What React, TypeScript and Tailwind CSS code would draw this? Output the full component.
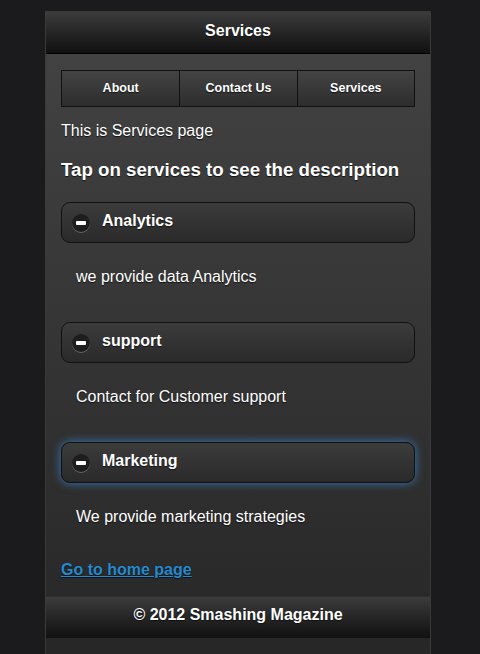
import { useState } from "react";

const font = { fontFamily: '"Liberation Sans", Arial, sans-serif' };

const sections = [
  { title: "Analytics", body: "we provide data Analytics" },
  { title: "support", body: "Contact for Customer support" },
  { title: "Marketing", body: "We provide marketing strategies" },
];

function MinusIcon() {
  return (
    <span className="flex h-[18px] w-[18px] items-center justify-center rounded-full bg-[#1e1e1e] shadow-[0_1px_0_rgba(255,255,255,0.25)]">
      <span className="block h-[4px] w-[10px] rounded-[1px] bg-white" />
    </span>
  );
}

export default function App() {
  const [focused] = useState(2);

  return (
    <div className="min-h-[654px] w-full bg-[#1b1b1d] pt-[11px] [text-shadow:0_1px_1px_#111]" style={font}>
      <div className="ml-[45px] flex min-h-[643px] w-[386px] flex-col border-x border-t border-[#3a3a3a] bg-gradient-to-b from-[#444] to-[#272727]">
        <header className="flex h-[42px] items-center justify-center border-b border-[#000] bg-gradient-to-b from-[#3c3c3c] to-[#111] pb-[4px]">
          <h1 className="text-[16px] font-bold text-white">Services</h1>
        </header>

        <main className="px-[15px] pt-[16px]">
          <nav className="grid h-[37px] grid-cols-3 border border-[#111]">
            {["About", "Contact Us", "Services"].map((t, i) => (
              <a
                key={t}
                className={`flex items-center justify-center bg-gradient-to-b from-[#444] to-[#2d2d2d] text-[12.5px] font-bold text-white ${
                  i > 0 ? "border-l border-[#111]" : ""
                }`}
              >
                {t}
              </a>
            ))}
          </nav>

          <p className="mt-[14px] text-[16px] leading-[20px] text-white">This is Services page</p>
          <h3 className="mt-[17px] text-[18.7px] font-bold leading-[24px] text-white">
            Tap on services to see the description
          </h3>

          <div className="mt-[20px]">
            {sections.map((s, i) => (
              <div key={s.title}>
                <div
                  className={`flex h-[41px] items-center gap-[12px] rounded-[9px] border border-[#111] bg-gradient-to-b from-[#3c3c3c] to-[#2a2a2a] pl-[10px] ${
                    focused === i ? "shadow-[0_0_10px_#387bbe]" : ""
                  }`}
                >
                  <MinusIcon />
                  <span className="-mt-[4px] text-[16px] font-bold text-white">{s.title}</span>
                </div>
                <p className="pb-[35px] pl-[15px] pt-[24px] text-[16px] leading-[20px] text-white">{s.body}</p>
              </div>
            ))}
          </div>

          <a className="-mt-[2px] block text-[16px] font-bold leading-[20px] text-[#2489ce] underline">
            Go to home page
          </a>
        </main>

        <footer className="mt-[16px] flex h-[42px] items-center justify-center border-t border-[#2f2f2f] bg-gradient-to-b from-[#3c3c3c] to-[#111] pb-[6px]">
          <p className="text-[16px] font-bold text-white">© 2012 Smashing Magazine</p>
        </footer>
      </div>
    </div>
  );
}
